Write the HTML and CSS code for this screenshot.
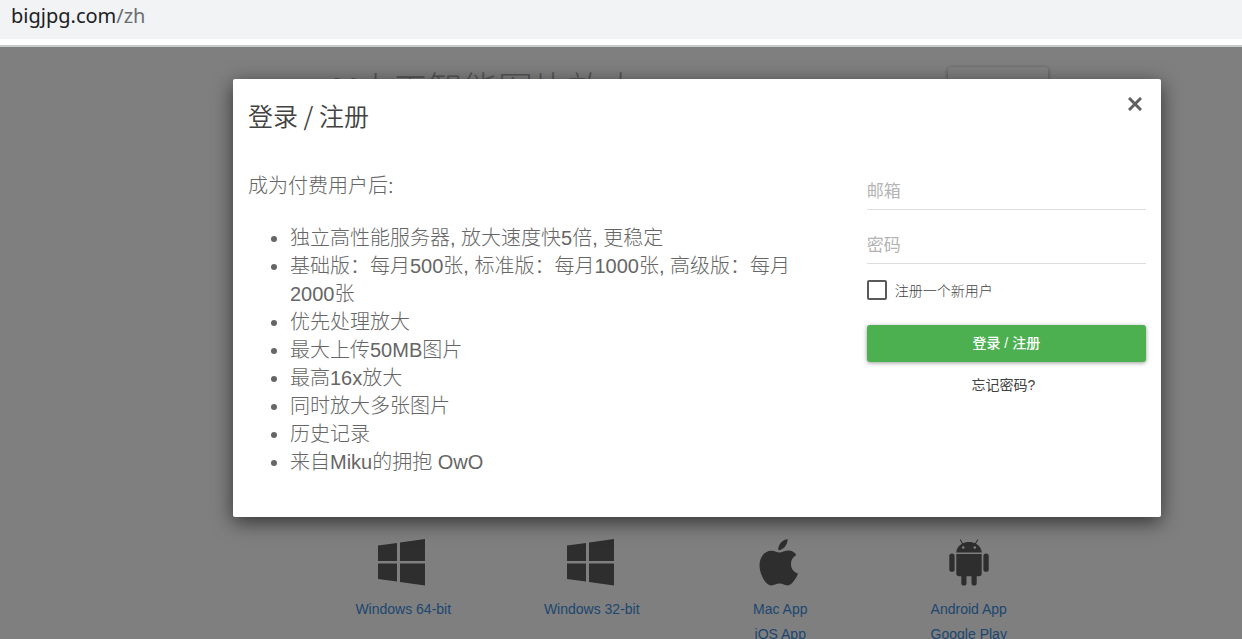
FILE: index.html
```html
<!DOCTYPE html>
<html lang="zh-CN">
<head>
    <meta charset="UTF-8">
    <meta name="viewport" content="width=device-width, initial-scale=1.0">
    <title>登录 / 注册</title>
    <link rel="stylesheet" href="styles.css">
</head>
<body>
    <!-- Address bar -->
    <header class="address-bar">bigjpg.com<span class="path">/zh</span></header>

    <div class="page">
        <div class="page-head">
            <h1>AI人工智能图片放大</h1>
            <button class="btn-head" type="button" aria-label="登录"></button>
        </div>

        <!-- Downloads -->
        <div class="downloads">
            <div class="download">
                <svg class="icon" viewBox="1 0 48 48"><path d="M0 6.6 19 4V22H0zM22 3.6 47 0V22H22zM0 24.5H19V42.5L0 40zM22 24.5H47V46.5L22 43z"/></svg>
                <a href="#">Windows 64-bit</a>
            </div>
            <div class="download">
                <svg class="icon" viewBox="1 0 48 48"><path d="M0 6.6 19 4V22H0zM22 3.6 47 0V22H22zM0 24.5H19V42.5L0 40zM22 24.5H47V46.5L22 43z"/></svg>
                <a href="#">Windows 32-bit</a>
            </div>
            <div class="download">
                <svg class="icon" viewBox="0 0 48 48"><path d="M31.5 0C32 5.500 27.500 11.300 22.300 11.300 21.700 6 26.300 .700 31.500 0zM40.300 16C36.800 18 35 21 35 25 35 29.600 37.500 33 42 34.600 40.500 38.800 36 46.500 31.500 46.500 28.500 46.500 27 44.600 23.500 44.600 20 44.600 18.300 46.500 15.500 46.500 9.500 46.500 3.500 35 3.500 26.500 3.500 17.500 8.800 11.800 15.500 11.800 19 11.800 21 13.600 23.500 13.600 26 13.600 28.500 11.400 32.800 11.400 35.800 11.400 38.800 13 40.300 16z"/></svg>
                <a href="#">Mac App</a>
                <a href="#">iOS App</a>
            </div>
            <div class="download">
                <svg class="icon" viewBox="0 0 48 48"><path fill-rule="evenodd" d="M15.500.300 18 4.200C21.500 2.600 26.500 2.600 30 4.200L32.500.300 33.300.800 31 4.700C34.200 6.500 36.600 9.500 36.800 13.600H11.200C11.400 9.500 13.800 6.500 17 4.700L14.700.800zM18.200 7.200A1.300 1.300 0 1 0 18.200 9.800 1.300 1.300 0 1 0 18.200 7.200zM29.800 7.200A1.300 1.300 0 1 0 29.800 9.800 1.300 1.300 0 1 0 29.800 7.200z"/><path d="M11.300 15H36.700V34.500A2.700 2.700 0 0 1 34 37.200H31.700V44A2.600 2.600 0 0 1 26.500 44V37.200H21.500V44A2.600 2.600 0 0 1 16.300 44V37.200H14A2.700 2.700 0 0 1 11.300 34.500z"/><rect x="4.300" y="14.600" width="5.300" height="18.200" rx="2.600"/><rect x="38.400" y="14.600" width="5.300" height="18.200" rx="2.600"/></svg>
                <a href="#">Android App</a>
                <a href="#">Google Play</a>
            </div>
        </div>

        <!-- Login dialog -->
        <div class="overlay">
            <div class="modal" role="dialog" aria-labelledby="modalTitle">
                <div class="modal-head">
                    <h2 id="modalTitle">登录 / 注册</h2>
                    <button class="btn-close" type="button" aria-label="关闭">
                        <svg viewBox="0 0 14 14" width="14" height="14"><path d="M1 1 13 13M13 1 1 13"/></svg>
                    </button>
                </div>
                <div class="modal-body">
                    <div class="benefits">
                        <p>成为付费用户后:</p>
                        <ul>
                            <li>独立高性能服务器, 放大速度快5倍, 更稳定</li>
                            <li>基础版：每月500张, 标准版：每月1000张, 高级版：每月2000张</li>
                            <li>优先处理放大</li>
                            <li>最大上传50MB图片</li>
                            <li>最高16x放大</li>
                            <li>同时放大多张图片</li>
                            <li>历史记录</li>
                            <li>来自Miku的拥抱 OwO</li>
                        </ul>
                    </div>
                    <form class="login-form">
                        <input class="field" type="email" placeholder="邮箱" aria-label="邮箱">
                        <input class="field" type="password" placeholder="密码" aria-label="密码">
                        <div class="check">
                            <input type="checkbox" id="newUser">
                            <label for="newUser">注册一个新用户</label>
                        </div>
                        <button class="btn-login" type="button">登录 / 注册</button>
                        <button class="btn-forgot" type="button">忘记密码?</button>
                    </form>
                </div>
            </div>
        </div>
    </div>
</body>
</html>
```

FILE: styles.css
```css
* {
    box-sizing: border-box;
}
body {
    display: flex;
    flex-direction: column;
    height: 100vh;
    margin: 0;
    overflow: hidden;
    font-family: "Liberation Sans", "Noto Sans CJK SC", sans-serif;
    font-size: 14px;
    color: #666;
}
button, input {
    font-family: inherit;
}
h1, h2, p, ul {
    margin: 0;
    font-weight: 300;
}
.address-bar {
    height: 45px;
    padding-left: 11px;
    border-bottom: 6px solid #fff;
    background-color: #f1f3f4;
    color: #202124;
    font-family: "Noto Sans", "Open Sans", sans-serif;
    font-size: 20px;
    line-height: 32px;
}
.address-bar .path {
    color: #6b6e72;
}
.page {
    position: relative;
    flex: 1;
    overflow: hidden;
    border-top: 2px solid #c8cbcc;
    background-color: #fff;
}
.page-head {
    display: flex;
    justify-content: space-between;
    height: 492px;
    margin: 0 194px 0 325px;
    padding-top: 20px;
}
.page-head h1 {
    font-size: 35px;
    line-height: 46px;
    color: #aaa;
}
.btn-head {
    width: 100px;
    height: 36px;
    border: 0;
    border-radius: 3px;
    background-color: #fff;
    box-shadow: 0 1px 4px rgba(0, 0, 0, 0.4);
}

/* Downloads */
.downloads {
    display: grid;
    grid-template-columns: repeat(4, 1fr);
    margin: 0 179px 0 309px;
}
.download {
    display: flex;
    flex-direction: column;
    align-items: center;
}
.icon {
    width: 48px;
    height: 48px;
    margin-bottom: 10px;
    overflow: visible;
    fill: #5c5c5c;
}
.download a {
    color: #3a8ee0;
    line-height: 25px;
    text-decoration: none;
}

/* Dialog */
.overlay {
    position: absolute;
    inset: 0;
    display: flex;
    align-items: flex-start;
    padding: 32px 81px 0 233px;
    background-color: rgba(0, 0, 0, 0.5);
}
.modal {
    flex: 1;
    padding-bottom: 41px;
    border-radius: 2px;
    background-color: #fff;
    box-shadow: 0 5px 20px rgba(0, 0, 0, 0.6);
}
.modal-head {
    display: flex;
    justify-content: space-between;
    align-items: flex-start;
    padding: 18px 15px 0;
}
.modal-head h2 {
    font-family: "Noto Sans CJK SC", sans-serif;
    font-size: 25px;
    font-weight: 350;
    line-height: 36px;
    color: #424242;
}
.btn-close {
    display: flex;
    margin-right: 4px;
    padding: 0;
    border: 0;
    background: none;
}
.btn-close path {
    stroke: #606060;
    stroke-width: 3;
}
.modal-body {
    display: grid;
    grid-template-columns: 2fr 1fr;
    padding-top: 39px;
}
.benefits {
    padding: 0 30px 0 15px;
    font-size: 20px;
    font-weight: 300;
    line-height: 28px;
}
.benefits ul {
    margin-top: 24px;
    padding-left: 42px;
}
.login-form {
    display: flex;
    flex-direction: column;
    padding: 0 15px;
}
.field {
    width: 100%;
    height: 38px;
    margin-bottom: 16px;
    padding: 2px 0 0;
    border: 0;
    border-bottom: 1px solid #ddd;
    background: none;
    font-size: 17px;
}
.field::placeholder {
    color: #b4b4b4;
}
.check {
    display: flex;
    align-items: center;
    gap: 8px;
    height: 20px;
}
.check input {
    appearance: none;
    width: 20px;
    height: 20px;
    margin: 0;
    border: 2px solid #5a5a5a;
    border-radius: 2px;
}
.check label {
    color: #444;
    font-weight: 300;
}
.btn-login {
    height: 37px;
    margin-top: 25px;
    padding: 0 0 3px;
    border: 0;
    border-radius: 3px;
    background-color: #4caf50;
    box-shadow: 0 1px 4px rgba(0, 0, 0, 0.4);
    color: #fff;
    font-size: 14px;
    font-weight: 500;
}
.btn-forgot {
    align-self: center;
    margin-top: 11px;
    padding: 0 6px 0 0;
    border: 0;
    background: none;
    color: #424242;
    font-size: 14px;
    line-height: 24px;
}
```
